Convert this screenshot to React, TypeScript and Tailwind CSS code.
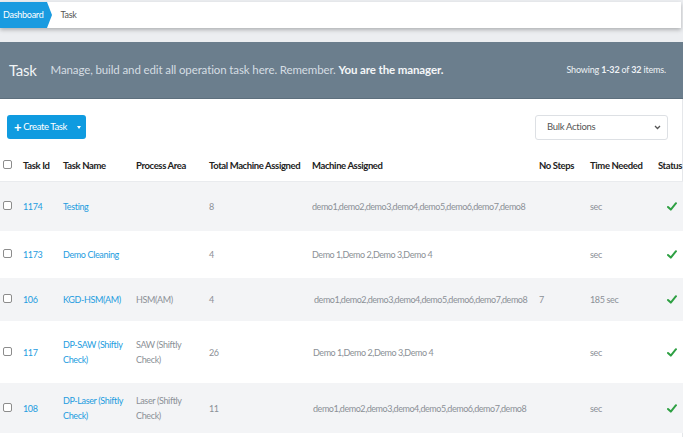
import React from "react";

type Row = {
  id: string;
  name: string[];
  area: string[];
  total: string;
  machines: string;
  steps: string;
  time: string;
  h: string;
  bg: string;
  mx: string;
};

const rows: Row[] = [
  { id: "1174", name: ["Testing"], area: [], total: "8", machines: "demo1,demo2,demo3,demo4,demo5,demo6,demo7,demo8", steps: "", time: "sec", h: "h-[50px]", bg: "bg-[#f3f4f6]", mx: "pl-[3px]" },
  { id: "1173", name: ["Demo Cleaning"], area: [], total: "4", machines: "Demo 1,Demo 2,Demo 3,Demo 4", steps: "", time: "sec", h: "h-[47px]", bg: "bg-white", mx: "pl-[3px]" },
  { id: "106", name: ["KGD-HSM(AM)"], area: ["HSM(AM)"], total: "4", machines: "demo1,demo2,demo3,demo4,demo5,demo6,demo7,demo8", steps: "7", time: "185 sec", h: "h-[43px]", bg: "bg-[#f3f4f6]", mx: "pl-[5px]" },
  { id: "117", name: ["DP-SAW (Shiftly", "Check)"], area: ["SAW (Shiftly", "Check)"], total: "26", machines: "Demo 1,Demo 2,Demo 3,Demo 4", steps: "", time: "sec", h: "h-[62px]", bg: "bg-white", mx: "pl-[4px]" },
  { id: "108", name: ["DP-Laser (Shiftly", "Check)"], area: ["Laser (Shiftly", "Check)"], total: "11", machines: "demo1,demo2,demo3,demo4,demo5,demo6,demo7,demo8", steps: "", time: "sec", h: "h-[50px]", bg: "bg-[#f3f4f6]", mx: "pl-[4px]" },
];

function Box() {
  return <span className="inline-block w-[9px] h-[9px] border border-[#8c8c8c] rounded-[2px] bg-white" />;
}

function Check() {
  return (
    <svg width="10" height="9" viewBox="0 0 10 9">
      <path d="M1 5 L3.8 7.6 L9 1.2" fill="none" stroke="#2ea043" strokeWidth="2" strokeLinecap="round" strokeLinejoin="round" />
    </svg>
  );
}

export default function App() {
  return (
    <div className="w-[683px] h-[437px] overflow-hidden bg-[#eceef1] font-['Lato',sans-serif] text-[10px]">
      {/* breadcrumb */}
      <div className="pt-[2px] pr-[2px] h-[42px]">
        <div className="h-[26px] bg-white shadow-[0_2px_4px_rgba(0,0,0,0.25)] flex items-center">
          <div className="relative h-full flex items-center bg-[#1a9be0] pl-[3px] pr-[4px] text-white text-[9px] tracking-[-0.03em]">
            Dashboard
            <span className="absolute right-[-5px] top-0 w-0 h-0 border-t-[13px] border-b-[13px] border-l-[5px] border-t-transparent border-b-transparent border-l-[#1a9be0]" />
          </div>
          <span className="ml-[13px] text-[#555] text-[9px] tracking-[-0.03em]">Task</span>
        </div>
      </div>

      {/* header band */}
      <div className="h-[57px] bg-[#6b7e8d] flex items-center pl-[9px] pr-[17px] border-b border-[#5d6f7d]">
        <span className="text-[15px] text-[#f1f4f6] mr-[14px] tracking-[-0.02em]">Task</span>
        <span className="text-[11.5px] text-[#d5dde3] tracking-[-0.01em]">
          Manage, build and edit all operation task here. Remember. <b className="text-[#f4f6f8] font-bold">You are the manager.</b>
        </span>
        <span className="ml-auto text-[9px] text-[#eef2f5] tracking-[-0.02em]">
          Showing <b>1-32</b> of <b>32</b> items.
        </span>
      </div>

      {/* content */}
      <div className="bg-white h-[338px] border-r border-[#e5e7ea]">
        <div className="flex items-center justify-between pl-[7px] pr-[14px] pt-[4px] h-[52px]">
          <div className="flex h-[24px] rounded-[3px] overflow-hidden bg-[#0f9be0] text-white">
            <div className="flex items-center w-[65px] pl-[7px] text-[9.5px] tracking-[-0.04em]">
              <span className="font-bold text-[13px] mr-[2px] leading-none">+</span>Create Task
            </div>
            <div className="flex items-center justify-center w-[14px]">
              <span className="w-0 h-0 border-l-[2.5px] border-r-[2.5px] border-t-[3px] border-l-transparent border-r-transparent border-t-white" />
            </div>
          </div>
          <div className="w-[133px] h-[25px] border border-[#dde0e4] rounded-[3px] flex items-center justify-between pl-[11px] pr-[6px] text-[#555] text-[9.5px] tracking-[-0.03em]">
            Bulk Actions
            <svg width="7" height="5" viewBox="0 0 7 5"><path d="M1 1 L3.5 3.5 L6 1" fill="none" stroke="#555" strokeWidth="1.3" /></svg>
          </div>
        </div>

        <table className="w-[720px] table-fixed border-collapse">
          <colgroup>
            <col className="w-[20px]" />
            <col className="w-[40px]" />
            <col className="w-[73px]" />
            <col className="w-[73px]" />
            <col className="w-[103px]" />
            <col className="w-[227px]" />
            <col className="w-[51px]" />
            <col className="w-[68px]" />
            <col className="w-[65px]" />
          </colgroup>
          <thead>
            <tr className="h-[30px] border-b border-[#e9ebee] text-left text-[#222] font-bold text-[9.5px] tracking-[-0.04em]">
              <th className="pl-[3px] font-normal"><Box /></th>
              <th className="pl-[3px]">Task Id</th>
              <th className="pl-[3px]">Task Name</th>
              <th className="pl-[3px]">Process Area</th>
              <th className="pl-[3px]">Total Machine Assigned</th>
              <th className="pl-[3px]">Machine Assigned</th>
              <th className="pl-[3px]">No Steps</th>
              <th className="pl-[3px]">Time Needed</th>
              <th className="pl-[3px]">Status</th>
            </tr>
          </thead>
          <tbody>
            {rows.map((r) => (
              <tr key={r.id} className={`${r.h} ${r.bg} text-[9px] text-[#8b9096] leading-[15px] tracking-[-0.04em]`}>
                <td className="pl-[3px]"><Box /></td>
                <td className="pl-[3px] text-[#1d9ce0]">{r.id}</td>
                <td className="pl-[3px] text-[#1d9ce0]">
                  {r.name.map((n, i) => <div key={i}>{n}</div>)}
                </td>
                <td className="pl-[3px]">
                  {r.area.map((n, i) => <div key={i}>{n}</div>)}
                </td>
                <td className="pl-[3px]">{r.total}</td>
                <td className={`${r.mx} tracking-[-0.05em]`}>{r.machines}</td>
                <td className="pl-[3px]">{r.steps}</td>
                <td className="pl-[3px]">{r.time}</td>
                <td className="pl-[12px]"><Check /></td>
              </tr>
            ))}
          </tbody>
        </table>
      </div>
    </div>
  );
}
